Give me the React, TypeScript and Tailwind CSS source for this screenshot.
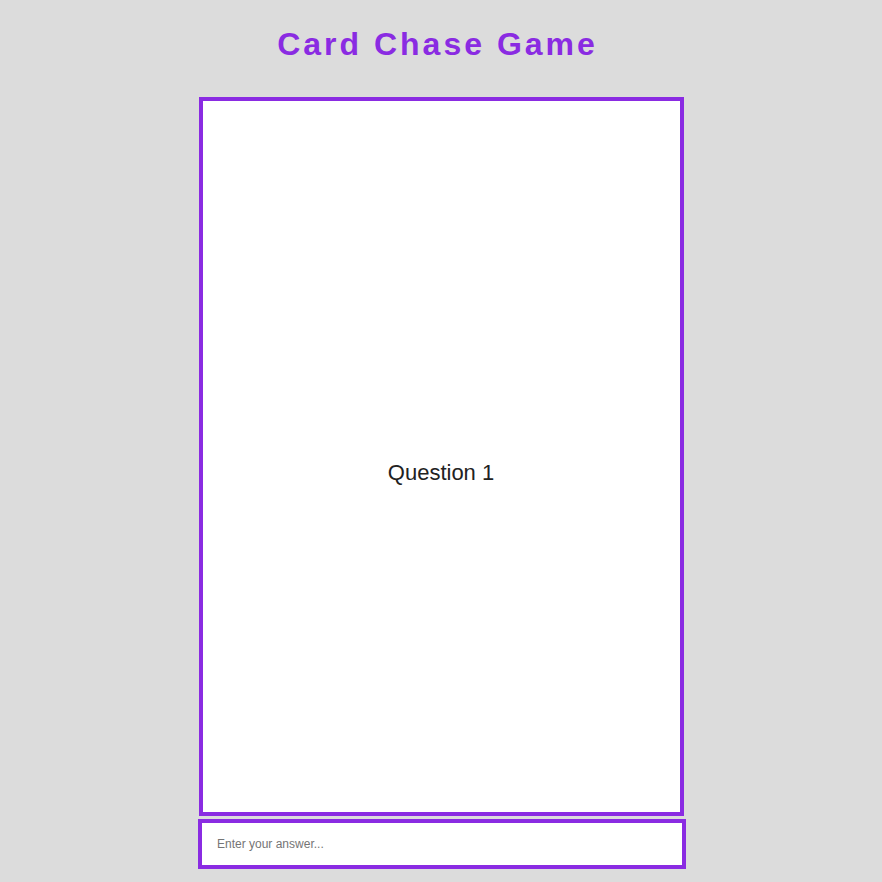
export default function App() {
  return (
    <div className="min-h-screen bg-[#dcdcdc] flex flex-col items-center pt-[26px] font-['Liberation_Sans',Arial,sans-serif]">
      <h1 className="h-[37px] leading-[37px] text-[32px] font-bold tracking-[3px] mr-[7px] text-[#8a2be2]">
        Card Chase Game
      </h1>

      <div className="mt-[34px] w-[485px] h-[719px] bg-white border-4 border-[#8a2be2] flex items-center justify-center pt-[31px]">
        <span className="text-[22px] text-[#222]">Question 1</span>
      </div>

      <input
        type="text"
        placeholder="Enter your answer..."
        className="mt-[3px] ml-[2px] w-[488px] h-[50px] bg-white border-4 border-[#8a2be2] px-[15px] text-[12px] text-[#222] placeholder:text-[#757575] outline-none"
      />
    </div>
  );
}
